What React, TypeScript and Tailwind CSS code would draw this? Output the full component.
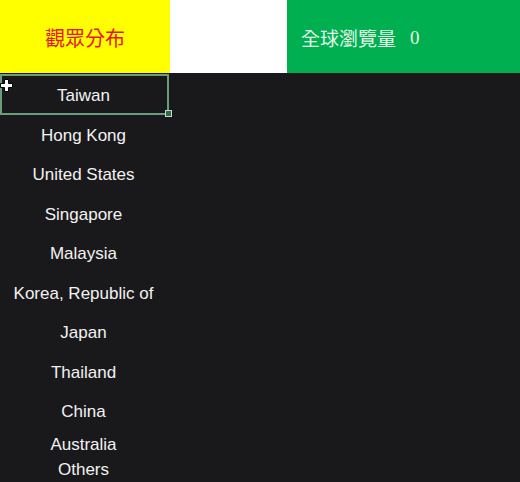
import React from 'react';

const countries: { name: string; h: string }[] = [
  { name: 'Taiwan', h: 'h-[39.5px]' },
  { name: 'Hong Kong', h: 'h-[39.5px]' },
  { name: 'United States', h: 'h-[39.5px]' },
  { name: 'Singapore', h: 'h-[39.5px]' },
  { name: 'Malaysia', h: 'h-[39.5px]' },
  { name: 'Korea, Republic of', h: 'h-[39.5px]' },
  { name: 'Japan', h: 'h-[39.5px]' },
  { name: 'Thailand', h: 'h-[39.5px]' },
  { name: 'China', h: 'h-[39.5px]' },
  { name: 'Australia', h: 'h-[26px]' },
  { name: 'Others', h: 'h-[25px]' },
];

const CellCursor: React.FC = () => (
  <svg className="absolute left-0 top-[79px]" width="14" height="14" viewBox="0 0 14 14">
    <path
      d="M4.5 0.5h4v4h4v4h-4v4h-4v-4h-4v-4h4z"
      fill="#fff"
      stroke="#000"
      strokeWidth="1"
    />
  </svg>
);

export default function App() {
  return (
    <div className="relative h-[482px] w-[520px] overflow-hidden bg-[#19191b] font-['Liberation_Sans',sans-serif]">
      {/* header strip */}
      <div className="flex h-[73px]">
        <div className="flex w-[170px] items-center justify-center bg-[#ffff00] pt-[2px] text-[20px] text-[#e8141c] font-['Noto_Sans_CJK_TC',serif]">
          觀眾分布
        </div>
        <div className="w-[117px] bg-white" />
        <div className="flex flex-1 items-center bg-[#00b050] pl-[14px] pt-[3px] text-[19px] text-[#e2f4e8] font-['Noto_Sans_CJK_TC',serif]">
          <span>全球瀏覽量</span>
          <span className="ml-[14px] font-['Liberation_Serif',serif]">0</span>
        </div>
      </div>

      {/* country list */}
      <div className="mt-[3px] w-[167px]">
        {countries.map((c) => (
          <div
            key={c.name}
            className={`${c.h} flex items-center justify-center text-[17px] text-[#f2f2f2]`}
          >
            {c.name}
          </div>
        ))}
      </div>

      {/* active cell outline */}
      <div className="absolute left-0 top-[74px] h-[41px] w-[169px] border-2 border-[#6b9c7c]" />
      <div className="absolute left-[166px] top-[111px] h-[5px] w-[5px] bg-[#2f6b45] ring-1 ring-[#c9d8cc]" />
      <CellCursor />
    </div>
  );
}
